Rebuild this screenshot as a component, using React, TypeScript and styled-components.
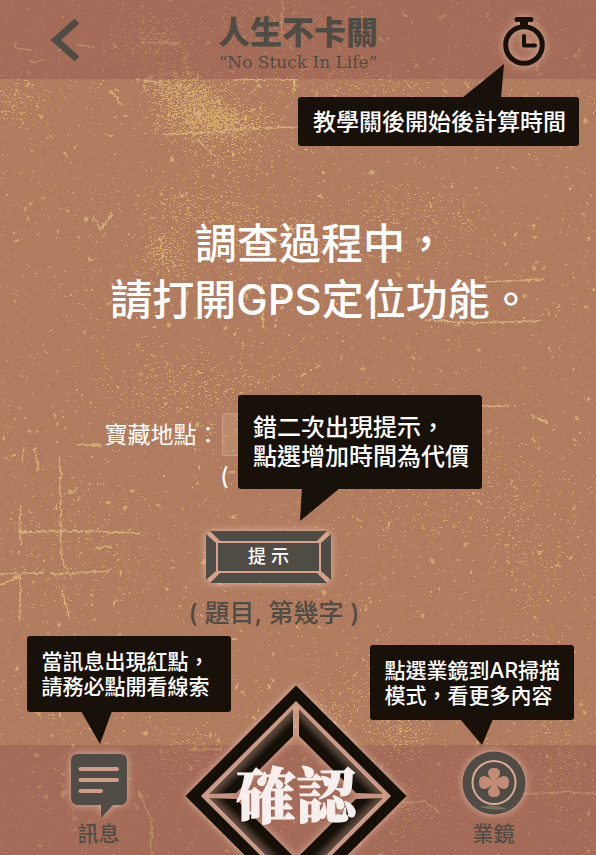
import React from "react";
import styled, { createGlobalStyle } from "styled-components";

const INK = "#17110a";
const FADED = "#4f4c45";
const GLOW = "rgba(255, 218, 202, 0.65)";

const GlobalStyle = createGlobalStyle`
  * { box-sizing: border-box; }
  body {
    margin: 0;
    background: #b07b5e;
    font-family: Inter, "Noto Sans CJK TC", sans-serif;
  }
  button, input { font-family: inherit; }
  button { border: 0; padding: 0; background: none; cursor: pointer; }
  h1, h2, p { margin: 0; }
  svg { display: block; }
`;

const Page = styled.div`
  position: relative;
  isolation: isolate;
  display: flex;
  flex-direction: column;
  min-height: 100vh;
  overflow: hidden;
  background: #b07b5e;
`;

const Texture = styled.svg`
  position: absolute;
  inset: 0;
  z-index: -1;
  width: 100%;
  height: 100%;
  pointer-events: none;
`;

const Header = styled.header`
  display: grid;
  grid-template-columns: 1fr auto 1fr;
  align-items: start;
  height: 79px;
  padding: 16px 51px 0;
  background: rgba(148, 88, 79, 0.4);
`;

const BackButton = styled.button`
  justify-self: start;
  padding-top: 2px;
`;

const Brand = styled.div`
  text-align: center;
  color: ${FADED};
`;

const BrandName = styled.h1`
  font-size: 32px;
  line-height: 34px;
  font-weight: 900;
`;

const BrandLine = styled.p`
  font-family: "DejaVu Serif", serif;
  font-size: 17px;
  line-height: 24px;
`;

const Anchor = styled.div<{ $end?: boolean }>`
  position: relative;
  justify-self: ${(p) => (p.$end ? "end" : "center")};
`;

const IconGlow = styled.svg`
  overflow: visible;
  filter: drop-shadow(0 0 4px ${GLOW});
`;

const Bubble = styled.div<{ $x: number; $y: number; $w: number; $h: number; $size: number; $line: number }>`
  position: absolute;
  z-index: 3;
  left: ${(p) => p.$x}px;
  top: ${(p) => p.$y}px;
  display: flex;
  align-items: center;
  width: ${(p) => p.$w}px;
  height: ${(p) => p.$h}px;
  padding-left: 15px;
  border-radius: 3px;
  background: ${INK};
  color: #fff;
  font-size: ${(p) => p.$size}px;
  line-height: ${(p) => p.$line}px;
  font-weight: 500;
  white-space: nowrap;
`;

const Tail = styled.svg`
  position: absolute;
  inset: 0;
  overflow: visible;
  pointer-events: none;
`;

const Main = styled.main`
  flex: 1;
  display: flex;
  flex-direction: column;
  align-items: center;
  padding: 137px 0 116px;
`;

const Notice = styled.h2`
  padding-left: 46px;
  color: #fff;
  font-size: 42px;
  line-height: 56px;
  font-weight: 500;
  text-align: center;
`;

const Field = styled.label`
  display: flex;
  align-items: center;
  margin-top: 85px;
  padding-right: 14px;
  color: #fff;
  font-size: 23px;
  line-height: 40px;
`;

const PlaceInput = styled.input`
  width: 256px;
  height: 43px;
  margin-left: 2px;
  padding: 0 12px;
  border: 1px solid rgba(230, 170, 145, 0.55);
  border-radius: 3px;
  background: rgba(205, 170, 130, 0.35);
  color: #fff;
  font-size: 23px;
`;

const FieldNote = styled.p`
  width: 156px;
  margin-top: 7px;
  color: #fff;
  font-size: 24px;
  line-height: 28px;
`;

const HintGroup = styled.div`
  position: relative;
  margin-top: 40px;
  padding-right: 59px;
`;

const HintButton = styled.button`
  display: grid;
  place-items: center;
  color: #fff;
  font-size: 18px;
  line-height: 52px;
  font-weight: 500;
  & > * { grid-area: 1 / 1; }
`;

const HintText = styled.span`
  position: relative;
`;

const Caption = styled.p`
  margin-top: 14px;
  padding-right: 48px;
  color: ${FADED};
  font-size: 25px;
  line-height: 32px;
  font-weight: 500;
`;

const Footer = styled.footer`
  display: grid;
  grid-template-columns: 1fr auto 1fr;
  align-items: start;
  height: 110px;
  padding: 0 16px 0 12px;
  background: rgba(148, 88, 79, 0.4);
`;

const NavButton = styled.button`
  display: flex;
  flex-direction: column;
  align-items: center;
  padding-top: 6px;
  color: ${FADED};
  font-size: 21px;
  line-height: 30px;
  font-weight: 500;
`;

const ConfirmButton = styled.button`
  display: grid;
  justify-items: center;
  align-items: center;
  height: 222px;
  margin-top: -60px;
  color: #f7efed;
  font-size: 60px;
  line-height: 60px;
  font-weight: 900;
  & > * { grid-area: 1 / 1; }
`;

const ConfirmText = styled.span`
  position: relative;
  padding-top: 4px;
  font-family: "Liberation Serif", "Noto Serif CJK TC", "Noto Sans CJK TC", serif;
  -webkit-text-stroke: 1px #f7efed;
`;

function random(seed: number) {
  let s = seed;
  return () => {
    s = (s + 0x6d2b79f5) | 0;
    let t = Math.imul(s ^ (s >>> 15), 1 | s);
    t = (t + Math.imul(t ^ (t >>> 7), 61 | t)) ^ t;
    return ((t ^ (t >>> 14)) >>> 0) / 4294967296;
  };
}

function speck(x: number, y: number, w: number, h: number) {
  return `M${Math.round(x)} ${Math.round(y)}h${w}v${h}h${-w}z`;
}

function scatter(seed: number, count: number) {
  const r = random(seed);
  let d = "";
  for (let i = 0; i < count; i++) {
    const x = r() * 596;
    const y = r() * 855;
    d += speck(x, y, r() > 0.75 ? 2 : 1, r() > 0.8 ? 2 : 1);
  }
  return d;
}

function cluster(seed: number, cx: number, cy: number, rx: number, ry: number, count: number) {
  const r = random(seed);
  let d = "";
  for (let i = 0; i < count; i++) {
    const gx = r() + r() + r() - 1.5;
    const gy = r() + r() + r() - 1.5;
    d += speck(cx + gx * rx, cy + gy * ry, r() > 0.6 ? 2 : 1, 1);
  }
  return d;
}

function chips(seed: number, count: number) {
  const r = random(seed);
  let d = "";
  for (let i = 0; i < count; i++) {
    const x = Math.round(r() * 596);
    const y = Math.round(r() * 855);
    const dx = Math.round(r() * 6 - 3);
    const dy = Math.round(r() * 6 - 3);
    d += `M${x} ${y}l${dx} ${dy}l${Math.round(r() * 4 - 2)} ${Math.round(r() * 3)}`;
  }
  return d;
}

const clusters: [number, number, number, number, number][] = [
  [195, 108, 40, 28, 1300],
  [225, 122, 48, 18, 800],
  [178, 82, 34, 18, 360],
  [155, 38, 44, 22, 260],
  [15, 100, 28, 26, 160],
  [165, 252, 26, 28, 330],
  [190, 205, 54, 24, 240],
  [255, 232, 80, 44, 520],
  [280, 20, 70, 30, 260],
  [400, 225, 80, 46, 360],
  [220, 150, 60, 30, 260],
  [340, 80, 100, 22, 240],
  [230, 390, 130, 44, 420],
  [440, 500, 130, 66, 420],
  [160, 385, 80, 40, 200],
  [75, 560, 80, 80, 240],
  [190, 755, 44, 26, 180],
  [400, 735, 28, 30, 240],
  [410, 810, 40, 26, 200],
  [555, 770, 36, 56, 260],
  [350, 700, 50, 40, 220],
  [530, 560, 60, 80, 280],
];

const clusterPath = clusters.map(([x, y, rx, ry, n], i) => cluster(71 + i * 37, x, y, rx, ry, n)).join("");

const scratches =
  "M18 532L80 531L140 533M20 506L21 545M60 458L61 530L62 560L72 580M95 549L112 546M0 574L44 573M50 574L110 571" +
  "M0 586L20 575M77 45L95 47M144 81L162 82M233 80L298 79M162 134L200 133L240 129L298 127M283 2L281 30L292 50" +
  "M295 78L294 94M425 320L470 323L540 321M485 282L545 279M262 283L263 329M520 794L570 792L596 794" +
  "M405 803L424 801L440 812M188 750L222 749M92 215L100 229L112 214M30 62L45 60M14 48L32 50M140 42L180 44" +
  "M138 790L151 820L152 855M470 407L510 406M24 448L22 460M35 447L38 470M77 445L101 445M110 90L122 105" +
  "M530 415L548 423M198 140L216 158M20 575L20 620M62 590L70 620";

function Grunge() {
  return (
    <Texture viewBox="0 0 596 855" preserveAspectRatio="xMidYMid slice" aria-hidden="true">
      <defs>
        <filter id="rough" x="0" y="0" width="596" height="855" filterUnits="userSpaceOnUse">
          <feTurbulence type="fractalNoise" baseFrequency="0.22" numOctaves="3" seed="4" result="noise" />
          <feDisplacementMap in="SourceGraphic" in2="noise" scale="5" xChannelSelector="R" yChannelSelector="G" />
        </filter>
      </defs>
      <g shapeRendering="crispEdges">
        <path d={scatter(7, 8500)} fill="#d9ad72" opacity="0.36" />
        <path d={scatter(99, 2900)} fill="#dcb478" opacity="0.75" />
        <path d={clusterPath} fill="#dcb16e" opacity="0.8" />
      </g>
      <g fill="none" stroke="#dcb67d" filter="url(#rough)">
        <path d={chips(31, 400)} strokeWidth="2" opacity="0.75" />
        <path d={scratches} strokeWidth="1.500" opacity="0.9" />
      </g>
    </Texture>
  );
}

function Timer() {
  return (
    <IconGlow width="42" height="50" viewBox="0 0 42 50" fill="none" stroke={INK} aria-hidden="true">
      <circle cx="21" cy="29" r="18.3" strokeWidth="5" />
      <path d="M14 3.5h14" strokeWidth="5" strokeLinecap="round" />
      <path d="M21 4v7" strokeWidth="8" />
      <path d="M21 20v9.500h11" strokeWidth="4" strokeLinecap="round" strokeLinejoin="round" />
    </IconGlow>
  );
}

function HintFrame() {
  return (
    <IconGlow width="125" height="52" viewBox="0 0 125 52" aria-hidden="true">
      <path d="M4 1H121L124 4V48L121 51H4L1 48V4Z" fill="#d8a28b" />
      <g fill={FADED}>
        <path d="M4 0H121L111 10H14Z" />
        <path d="M4 52H121L111 42H14Z" />
        <path d="M0 3L10 12V40L0 49Z" />
        <path d="M125 3L115 12V40L125 49Z" />
        <rect x="12" y="12" width="101" height="28" />
      </g>
    </IconGlow>
  );
}

function Message() {
  return (
    <IconGlow width="58" height="68" viewBox="0 0 58 68" aria-hidden="true">
      <path d="M8 3H50Q57 3 57 10V46Q57 54 50 54H43L31 67V54H8Q1 54 1 46V10Q1 3 8 3Z" fill={FADED} />
      <path d="M10.500 18H47M10.500 29H47M10.500 40H31" stroke="#d39e89" strokeWidth="4" strokeLinecap="round" />
    </IconGlow>
  );
}

function Mirror() {
  return (
    <IconGlow width="64" height="68" viewBox="0 0 64 68" aria-hidden="true">
      <circle cx="32" cy="32" r="31.500" fill={FADED} />
      <circle cx="32" cy="31.500" r="21.500" fill="none" stroke="#dca994" strokeWidth="2" />
      <path
        d="M30 29Q26 25 26 22Q26 17 32 17Q38 17 38 22Q38 25 34 29Q39 25 42 25Q47 25 47 31Q47 38 42 38Q39 38 34 34Q38 39 38 41Q38 46 32 46Q26 46 26 41Q26 39 30 34Q25 38 22 38Q17 38 17 31Q17 25 22 25Q25 25 30 29Z"
        fill="#c28b76"
      />
      <path d="M17 56Q32 52 45 58Q31 60 17 56Z" fill="#77705f" />
    </IconGlow>
  );
}

function Diamond() {
  return (
    <IconGlow width="222" height="222" viewBox="0 0 222 222" aria-hidden="true">
      <defs>
        <linearGradient id="bevelA" x1="0" y1="0" x2="1" y2="1">
          <stop offset="0.5" stopColor="#6b5245" />
          <stop offset="0.59" stopColor="#141008" />
        </linearGradient>
        <linearGradient id="bevelB" x1="1" y1="0" x2="0" y2="1">
          <stop offset="0.5" stopColor="#6b5245" />
          <stop offset="0.59" stopColor="#141008" />
        </linearGradient>
        <linearGradient id="bevelC" x1="0" y1="1" x2="1" y2="0">
          <stop offset="0.5" stopColor="#6b5245" />
          <stop offset="0.59" stopColor="#141008" />
        </linearGradient>
        <linearGradient id="bevelD" x1="1" y1="1" x2="0" y2="0">
          <stop offset="0.5" stopColor="#6b5245" />
          <stop offset="0.59" stopColor="#141008" />
        </linearGradient>
      </defs>
      <path d="M111 9L213 111L111 213L9 111Z" fill="none" stroke="#141008" strokeWidth="12" />
      <path d="M111 18L204 111L111 204L18 111Z" fill="none" stroke="#c99682" strokeWidth="3" />
      <path d="M108 24V51L51 108L24 109Z" fill="url(#bevelA)" />
      <path d="M114 24V51L171 108L198 109Z" fill="url(#bevelB)" />
      <path d="M24 113L51 114L108 171V198Z" fill="url(#bevelC)" />
      <path d="M198 113L171 114L114 171V198Z" fill="url(#bevelD)" />
    </IconGlow>
  );
}

type TipProps = {
  x: number;
  y: number;
  w: number;
  h: number;
  size: number;
  line: number;
  tail: string;
  lines: string[];
};

function Tip({ x, y, w, h, size, line, tail, lines }: TipProps) {
  return (
    <Bubble role="note" $x={x} $y={y} $w={w} $h={h} $size={size} $line={line}>
      <Tail width={w} height={h} aria-hidden="true">
        <polygon points={tail} fill={INK} />
      </Tail>
      <p>
        {lines.map((t, i) => (
          <React.Fragment key={t}>
            {i > 0 && <br />}
            {t}
          </React.Fragment>
        ))}
      </p>
    </Bubble>
  );
}

export default function App() {
  return (
    <>
      <GlobalStyle />
      <Page>
        <Grunge />
        <Header>
          <BackButton aria-label="返回">
            <svg width="29" height="44" viewBox="0 0 29 44" fill="none" stroke={FADED} strokeWidth="7" aria-hidden="true">
              <path d="M26 3L5 22L26 41" />
            </svg>
          </BackButton>
          <Brand>
            <BrandName>人生不卡關</BrandName>
            <BrandLine>“No Stuck In Life”</BrandLine>
          </Brand>
          <Anchor $end>
            <button aria-label="計時">
              <Timer />
            </button>
            <Tip x={-205} y={81} w={281} h={49} size={23} line={32} tail="164,1 206,-33 203,1" lines={["教學關後開始後計算時間"]} />
          </Anchor>
        </Header>

        <Main>
          <Notice>
            調查過程中，
            <br />
            請打開GPS定位功能。
          </Notice>
          <Field>
            寶藏地點：
            <PlaceInput type="text" />
          </Field>
          <FieldNote>(</FieldNote>
          <HintGroup>
            <HintButton>
              <HintFrame />
              <HintText>提 示</HintText>
            </HintButton>
            <Tip
              x={32}
              y={-136}
              w={244}
              h={94}
              size={24}
              line={29}
              tail="64,93 62,126 102,93"
              lines={["錯二次出現提示，", "點選增加時間為代價"]}
            />
          </HintGroup>
          <Caption>( 題目, 第幾字 )</Caption>
        </Main>

        <Footer>
          <Anchor>
            <NavButton>
              <Message />
              訊息
            </NavButton>
            <Tip
              x={-43}
              y={-109}
              w={204}
              h={76}
              size={21}
              line={25}
              tail="54,75 73,108 85,75"
              lines={["當訊息出現紅點，", "請務必點開看線索"]}
            />
          </Anchor>
          <ConfirmButton>
            <Diamond />
            <ConfirmText>確認</ConfirmText>
          </ConfirmButton>
          <Anchor>
            <NavButton>
              <Mirror />
              業鏡
            </NavButton>
            <Tip
              x={-92}
              y={-100}
              w={204}
              h={75}
              size={21}
              line={25}
              tail="90,74 112,100 123,74"
              lines={["點選業鏡到AR掃描", "模式，看更多內容"]}
            />
          </Anchor>
        </Footer>
      </Page>
    </>
  );
}
